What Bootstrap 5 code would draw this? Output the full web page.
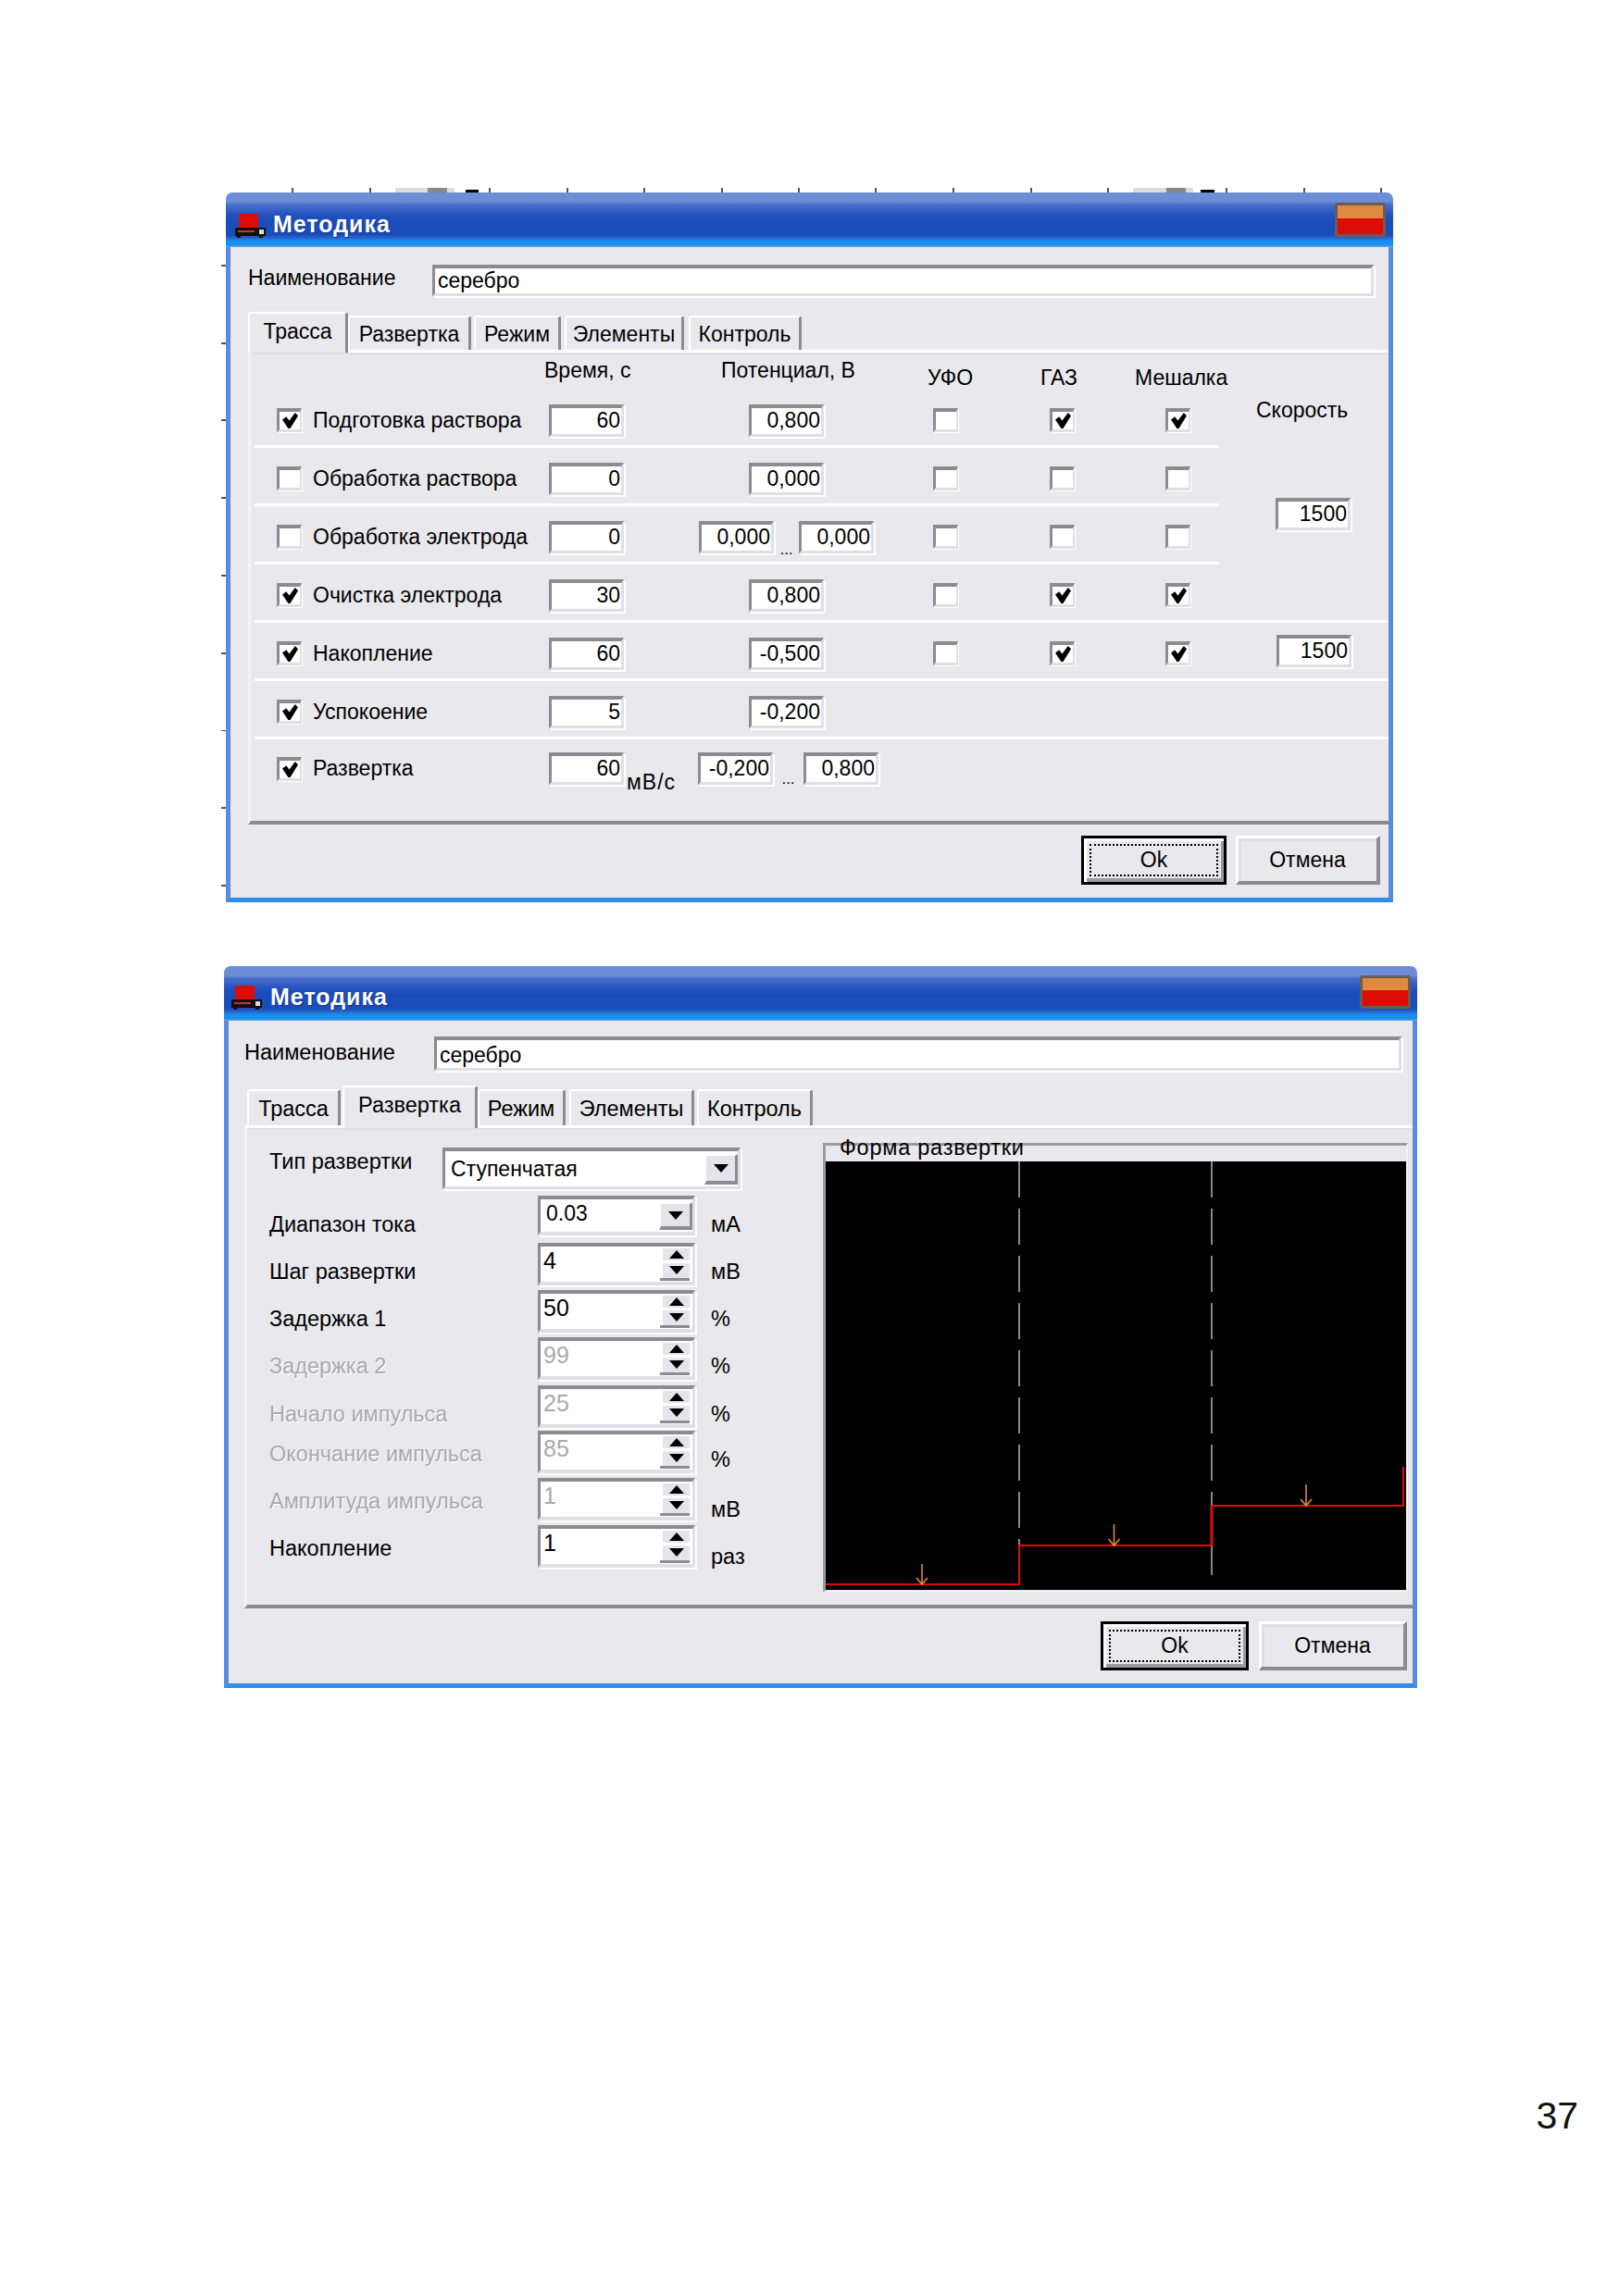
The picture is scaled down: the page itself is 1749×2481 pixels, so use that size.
<!DOCTYPE html>
<html lang="ru">
<head>
<meta charset="utf-8">
<title>Методика</title>
<link rel="stylesheet" href="https://cdn.jsdelivr.net/npm/bootstrap@5.3.0/dist/css/bootstrap.min.css">
<style>
html,body{margin:0;background:#fff}
body{font-family:"Liberation Sans",Arial,sans-serif;font-size:23px;line-height:29px;color:#000;width:1749px;height:2481px;overflow:hidden}
.sheet-top{display:block;height:5px;margin-top:203px;width:1749px}
.dlg-wrap{display:flex;margin-left:239px}
.tick-col{width:5px;flex:none;background:repeating-linear-gradient(to bottom,transparent 0 78px,#555 78px 80px,transparent 80px 83.75px)}
.dlg{display:flex;flex-direction:column;flex:none}
.dlg-a{width:1261px;height:767px}
.dlg-b{width:1289px;height:780px;margin-left:-2px;font-size:23.5px}
.wrap-b{margin-top:69px}
.ttl{height:59px;border-radius:7px 7px 0 0;background:linear-gradient(to bottom,#6d8dd6 0,#6d8dd6 10px,#4a70cb 13px,#2552bf 24px,#1b4dba 30px,#1b4dba 46px,#2a6cd0 50px,#178fee 52px,#178fee 57px,#8aa6dd 59px);display:flex;align-items:flex-start;position:relative;flex:none}
.ttl-ico{margin:23px 0 0 10px;flex:none}
.ttl-txt{margin:19px 0 0 7px;color:#fff;font-weight:700;font-size:25px;letter-spacing:1px;line-height:30px;text-shadow:1px 1px 0 #0f2f86}
.ttl-x{margin:11px 8px 0 auto;width:55px;height:37px;border:3px solid #6b5b55;border-radius:3px;background:linear-gradient(to bottom,#e08a40 0,#e08a40 44%,#dd0d05 44%,#dd0d05 100%)}
.dlg-b .ttl-ico{margin:21px 0 0 8px}
.dlg-b .ttl-txt{margin:18px 0 0 8px}
.dlg-b .ttl-x{margin:10px 7px 0 auto;height:36px}
.cli{flex:1;background:#e9e8ed;border-left:5px solid #5b8be0;border-right:5px solid #5b8be0;border-bottom:5px solid #2f8eea;display:flex;flex-direction:column;min-height:0}
.nm-row{display:flex;align-items:flex-start;margin-top:19px;padding-left:19px;padding-right:16px}
.nm-lbl{width:199px;flex:none;margin-top:0}
.dlg-b .nm-row{margin-top:17px;padding-left:17px;padding-right:12px}
.dlg-b .nm-lbl{width:205px;margin-top:3px}
.fld{border-radius:0;background:#fff;color:#000;padding:0 4px;font-size:23px;line-height:27px;border-style:solid;border-color:#8c8b91 #dfdfe6 #dfdfe6 #8c8b91;border-width:4px 3px 3px 3px;box-shadow:2px 2px 0 #fff;min-height:0;height:35px;white-space:nowrap}
.fld-nm{flex:1;width:auto;height:34px;padding:0 1px 0 3px}
.dlg-b .fld-nm{height:37px;line-height:32px}
.num{width:81px;text-align:right;flex:none;padding-right:1px}
.spd-hi{margin-top:-6px}
.xp-tabs{border:0;margin:17px 0 0 19px;height:41px;align-items:flex-end;flex-wrap:nowrap;flex:none;gap:0;position:relative;z-index:1}
.xp-tabs .nav-link{border-radius:3px 3px 0 0;border:0;border-top:2px solid #fff;border-left:2px solid #fff;border-right:3px solid #8c8b91;background:#e9e8ed;color:#000;padding:3px 0 0;height:37px;line-height:30px;margin:0;font-size:inherit;text-align:center}
.xp-tabs .nav-link.active{height:44px;padding-top:4px;background:#e9e8ed;color:#000;border-color:#fff #8c8b91 #e9e8ed #fff;margin-bottom:-3px}
.dlg-b .xp-tabs{margin:16px 0 0 20px;height:43px}
.dlg-b .xp-tabs .nav-link{height:39px;padding-top:4px}
.dlg-b .xp-tabs .nav-link.active{height:46px}
.t-a1{width:108px}.t-a2{width:133px}.t-a3{width:94px;margin-left:3px}.t-a4{width:129px;margin-left:4px}.t-a5{width:122px;margin-left:5px}
.t-b1{width:101px}.t-b2{width:146px;margin-left:2px}.t-b3{width:95px}.t-b4{width:135px;margin-left:4px}.t-b5{width:125px;margin-left:3px}
.pane{margin-left:19px;height:513px;border-top:3px solid #fff;border-left:3px solid #f4f4f7;border-bottom:4px solid #8c8b91;flex:none;box-shadow:inset 0 2px 0 #dfdfe6}
.dlg-b .pane{margin-left:17px;height:522px;display:flex}
.top-blk{display:flex}
.left-blk{width:1046px;flex:none}
.head-row{display:grid;grid-template-columns:317px 191px 223px 122px 102px auto;height:40px}
.head-row .hi{padding-top:5px}
.head-row .lo{padding-top:13px}
.tr{display:grid;align-items:center;margin-left:4px;padding-left:24px;height:63px;padding-top:6px;border-bottom:3px solid #fff;grid-template-columns:294px 83px 332px 126px 125px 120px 83px}
.tr-last{height:auto;padding-top:10px;border-bottom:0}
.chk-lbl{display:flex;align-items:center;gap:12px;white-space:nowrap}
.chk{width:27px;height:26px;flex:none;background:#fff;border-style:solid;border-color:#8c8b91 #dfdfe6 #dfdfe6 #8c8b91;border-width:4px 2px 3px 3px;box-shadow:1px 1px 0 #fff;display:flex;align-items:center;justify-content:center}
.pot{display:flex;align-items:center}
.pot-one{margin-left:133px}
.pot-two{margin-left:79px}
.pot-unit{width:78px;flex:none;padding:22px 0 0 1px;margin-bottom:-8px;white-space:nowrap;letter-spacing:1px}
.dots{width:27px;flex:none;font-size:17px;line-height:10px;text-align:center;align-self:flex-end;margin-bottom:-1px}
.dots-low{margin-bottom:5px;width:33px}
.spd{flex:1}
.spd-lbl{margin:48px 0 0 40px}
.spd .fld{margin:80px 0 0 61px}
.acts{display:flex;justify-content:flex-end;gap:10px;padding:12px 9px 0 0}
.xp-btn{width:156px;height:53px;border-radius:0;padding:0;font-size:23px;color:#000;background:#e9e8ed;border-style:solid;border-width:3px 4px 4px 3px;border-color:#fff #8c8b91 #8c8b91 #fff;box-shadow:inset 0 3px 0 #dfdfe6,inset 3px 0 0 #dfdfe6;line-height:40px}
.xp-btn:hover{background:#e9e8ed;color:#000;border-color:#fff #8c8b91 #8c8b91 #fff}
.xp-ok{border:3px solid #000;box-shadow:inset 3px 3px 0 #fff,inset -3px -4px 0 #9b9ba1;width:157px;padding:6px 6px 7px 6px}
.xp-ok:hover{border-color:#000}
.xp-ok span{display:block;border:2px dotted #000;height:35px;line-height:31px}
.dlg-b .acts{padding:14px 6px 0 0;gap:11px}
.dlg-b .xp-btn{width:160px}
.col-l{width:622px;flex:none;padding-top:21px}
.typ-row{display:flex;align-items:flex-start;padding-left:24px}
.typ-lbl{width:187px;flex:none;padding-top:1px}
.cmb{display:flex;justify-content:space-between;padding:0 2px 0 5px;align-items:stretch;margin:0}
.cmb-wide{width:322px;height:45px;line-height:38px;flex:none;padding:0 0 0 6px}
.cmb-btn{width:36px;flex:none;margin:3px 0 2px;background:#e4e4ea;border-right:3px solid #8c8b91;border-bottom:4px solid #8c8b91;border-left:2px solid #fff;border-top:2px solid #fff;display:flex;align-items:center;justify-content:center}
.cmb-sm{width:36px}
.tri-d{width:0;height:0;border-left:8px solid transparent;border-right:8px solid transparent;border-top:9px solid #000}
.tri-u{width:0;height:0;border-left:8px solid transparent;border-right:8px solid transparent;border-bottom:9px solid #000}
.fr{display:grid;grid-template-columns:290px 172px auto;padding-left:24px;height:51px;align-items:start}
.fr-first{margin-top:7px}
.fr-52{height:52px}
.fr-49{height:49px}
.fl{padding-top:17px;white-space:nowrap}
.fl-hi{padding-top:11px}
.fu{padding:17px 0 0 15px}
.fu-lo{padding-top:20px}
.dis{color:#a9a9ae;text-shadow:1px 1px 0 #fff}
.spin{width:170px;height:46px;display:flex;justify-content:space-between;padding:0 3px 0 3px;line-height:30px;font-size:25px;border-width:4px 3px 4px 3px}
.cmb-range{height:43px;padding-left:6px;padding-right:0;line-height:30px;font-size:23px}
.spin-b{width:32px;flex:none;display:flex;flex-direction:column;gap:3px;padding-top:2px;border-bottom:3px solid #8c8b91;margin-bottom:1px}
.spin-b>div{background:#e4e4ea;display:flex;align-items:center;justify-content:center;margin-left:3px}
.s-up{height:13px}.s-dn{height:17px}
.grp{position:relative;margin-top:16px;width:632px;height:485px;border-style:solid;border-color:#9b9ba1 #f4f4f7 #f4f4f7 #9b9ba1;border-width:3px 2px 1px 3px;padding-top:17px;flex:none}
.grp-ttl{position:absolute;left:15px;top:-11px;line-height:27px;white-space:nowrap;letter-spacing:.75px}
.grp svg{display:block}
.pg-no{display:flex;justify-content:flex-end;padding-right:44px;margin-top:438px;font-size:41px;line-height:49px;color:#111}
</style>
</head>
<body>
<svg width="0" height="0" class="position-absolute">
  <defs>
    <symbol id="tick" viewBox="0 0 16 16"><polygon points="0,7 4,4 7,8 13,0 16,3 8,16 6,16"/></symbol>
    <symbol id="app" viewBox="0 0 34 26">
      <rect x="4" y="0" width="21" height="15" fill="#dd0d05"/>
      <rect x="0" y="15" width="33" height="9" fill="#111"/>
      <rect x="3" y="18" width="18" height="2" fill="#c33"/>
      <rect x="2" y="24" width="4" height="2" fill="#111"/><rect x="26" y="24" width="4" height="2" fill="#111"/>
      <rect x="26" y="17" width="5" height="5" fill="#ddd"/>
    </symbol>
  </defs>
</svg>

<svg class="sheet-top" viewBox="0 0 1749 5">
  <g fill="#555">
    <rect x="315" y="0" width="2" height="5"/><rect x="399" y="0" width="2" height="5"/><rect x="528" y="0" width="2" height="5"/><rect x="612" y="0" width="2" height="5"/><rect x="695" y="0" width="2" height="5"/><rect x="779" y="0" width="2" height="5"/><rect x="862" y="0" width="2" height="5"/><rect x="945" y="0" width="2" height="5"/><rect x="1029" y="0" width="2" height="5"/><rect x="1113" y="0" width="2" height="5"/><rect x="1196" y="0" width="2" height="5"/><rect x="1324" y="0" width="2" height="5"/><rect x="1408" y="0" width="2" height="5"/><rect x="1491" y="0" width="2" height="5"/>
  </g>
  <rect x="427" y="0" width="64" height="5" fill="#ddd"/><rect x="462" y="0" width="21" height="5" fill="#888"/><rect x="503" y="2" width="14" height="3" fill="#000"/>
  <rect x="1224" y="0" width="65" height="5" fill="#ddd"/><rect x="1260" y="0" width="21" height="5" fill="#888"/><rect x="1297" y="2" width="15" height="3" fill="#000"/>
</svg>

<div class="dlg-wrap">
  <div class="tick-col"></div>
  <section class="dlg dlg-a">
    <div class="ttl">
      <svg class="ttl-ico" width="34" height="26"><use href="#app"/></svg>
      <div class="ttl-txt">Методика</div>
      <div class="ttl-x"></div>
    </div>
    <div class="cli">
      <div class="nm-row">
        <div class="nm-lbl">Наименование</div>
        <div class="form-control fld fld-nm">серебро</div>
      </div>
      <ul class="nav nav-tabs xp-tabs">
        <li class="nav-item t-a1"><a class="nav-link active">Трасса</a></li>
        <li class="nav-item t-a2"><a class="nav-link">Развертка</a></li>
        <li class="nav-item t-a3"><a class="nav-link">Режим</a></li>
        <li class="nav-item t-a4"><a class="nav-link">Элементы</a></li>
        <li class="nav-item t-a5"><a class="nav-link">Контроль</a></li>
      </ul>
      <div class="pane">
        <div class="top-blk">
          <div class="left-blk">
            <div class="head-row">
              <div></div>
              <div class="hi">Время, с</div>
              <div class="hi">Потенциал, В</div>
              <div class="lo">УФО</div>
              <div class="lo">ГАЗ</div>
              <div class="lo">Мешалка</div>
            </div>
            <div class="tr">
              <div class="chk-lbl"><div class="chk"><svg width="17" height="17"><use href="#tick"/></svg></div>Подготовка раствора</div>
              <div class="form-control fld num">60</div>
              <div class="pot"><div class="form-control fld num pot-one">0,800</div></div>
              <div class="chk"></div>
              <div class="chk"><svg width="17" height="17"><use href="#tick"/></svg></div>
              <div class="chk"><svg width="17" height="17"><use href="#tick"/></svg></div>
            </div>
            <div class="tr">
              <div class="chk-lbl"><div class="chk"></div>Обработка раствора</div>
              <div class="form-control fld num">0</div>
              <div class="pot"><div class="form-control fld num pot-one">0,000</div></div>
              <div class="chk"></div><div class="chk"></div><div class="chk"></div>
            </div>
            <div class="tr">
              <div class="chk-lbl"><div class="chk"></div>Обработка электрода</div>
              <div class="form-control fld num">0</div>
              <div class="pot"><div class="form-control fld num pot-two">0,000</div><div class="dots">...</div><div class="form-control fld num">0,000</div></div>
              <div class="chk"></div><div class="chk"></div><div class="chk"></div>
            </div>
          </div>
          <div class="spd">
            <div class="spd-lbl">Скорость</div>
            <div class="form-control fld num">1500</div>
          </div>
        </div>
        <div class="tr">
          <div class="chk-lbl"><div class="chk"><svg width="17" height="17"><use href="#tick"/></svg></div>Очистка электрода</div>
          <div class="form-control fld num">30</div>
          <div class="pot"><div class="form-control fld num pot-one">0,800</div></div>
          <div class="chk"></div>
          <div class="chk"><svg width="17" height="17"><use href="#tick"/></svg></div>
          <div class="chk"><svg width="17" height="17"><use href="#tick"/></svg></div>
        </div>
        <div class="tr">
          <div class="chk-lbl"><div class="chk"><svg width="17" height="17"><use href="#tick"/></svg></div>Накопление</div>
          <div class="form-control fld num">60</div>
          <div class="pot"><div class="form-control fld num pot-one">-0,500</div></div>
          <div class="chk"></div>
          <div class="chk"><svg width="17" height="17"><use href="#tick"/></svg></div>
          <div class="chk"><svg width="17" height="17"><use href="#tick"/></svg></div>
          <div class="form-control fld num spd-hi">1500</div>
        </div>
        <div class="tr">
          <div class="chk-lbl"><div class="chk"><svg width="17" height="17"><use href="#tick"/></svg></div>Успокоение</div>
          <div class="form-control fld num">5</div>
          <div class="pot"><div class="form-control fld num pot-one">-0,200</div></div>
        </div>
        <div class="tr tr-last">
          <div class="chk-lbl"><div class="chk"><svg width="17" height="17"><use href="#tick"/></svg></div>Развертка</div>
          <div class="form-control fld num">60</div>
          <div class="pot"><div class="pot-unit">мВ/с</div><div class="form-control fld num">-0,200</div><div class="dots dots-low">...</div><div class="form-control fld num">0,800</div></div>
        </div>
      </div>
      <div class="acts">
        <button type="button" class="btn xp-btn xp-ok"><span>Ok</span></button>
        <button type="button" class="btn xp-btn">Отмена</button>
      </div>
    </div>
  </section>
</div>

<div class="dlg-wrap wrap-b">
  <div class="tick-col invisible"></div>
  <section class="dlg dlg-b">
    <div class="ttl">
      <svg class="ttl-ico" width="34" height="26"><use href="#app"/></svg>
      <div class="ttl-txt">Методика</div>
      <div class="ttl-x"></div>
    </div>
    <div class="cli">
      <div class="nm-row">
        <div class="nm-lbl">Наименование</div>
        <div class="form-control fld fld-nm">серебро</div>
      </div>
      <ul class="nav nav-tabs xp-tabs">
        <li class="nav-item t-b1"><a class="nav-link">Трасса</a></li>
        <li class="nav-item t-b2"><a class="nav-link active">Развертка</a></li>
        <li class="nav-item t-b3"><a class="nav-link">Режим</a></li>
        <li class="nav-item t-b4"><a class="nav-link">Элементы</a></li>
        <li class="nav-item t-b5"><a class="nav-link">Контроль</a></li>
      </ul>
      <div class="pane">
        <div class="col-l">
          <div class="typ-row">
            <div class="typ-lbl">Тип развертки</div>
            <div class="form-control fld cmb cmb-wide"><span>Ступенчатая</span><div class="cmb-btn"><div class="tri-d"></div></div></div>
          </div>
          <div class="fr fr-first">
            <div class="fl">Диапазон тока</div>
            <div class="form-control fld spin cmb-range"><span>0.03</span><div class="cmb-btn cmb-sm"><div class="tri-d"></div></div></div>
            <div class="fu">мА</div>
          </div>
          <div class="fr">
            <div class="fl">Шаг развертки</div>
            <div class="form-control fld spin"><span>4</span><div class="spin-b"><div class="s-up"><div class="tri-u"></div></div><div class="s-dn"><div class="tri-d"></div></div></div></div>
            <div class="fu">мВ</div>
          </div>
          <div class="fr">
            <div class="fl">Задержка 1</div>
            <div class="form-control fld spin"><span>50</span><div class="spin-b"><div class="s-up"><div class="tri-u"></div></div><div class="s-dn"><div class="tri-d"></div></div></div></div>
            <div class="fu">%</div>
          </div>
          <div class="fr fr-52">
            <div class="fl dis">Задержка 2</div>
            <div class="form-control fld spin"><span class="dis">99</span><div class="spin-b"><div class="s-up"><div class="tri-u"></div></div><div class="s-dn"><div class="tri-d"></div></div></div></div>
            <div class="fu">%</div>
          </div>
          <div class="fr fr-49">
            <div class="fl dis">Начало импульса</div>
            <div class="form-control fld spin"><span class="dis">25</span><div class="spin-b"><div class="s-up"><div class="tri-u"></div></div><div class="s-dn"><div class="tri-d"></div></div></div></div>
            <div class="fu">%</div>
          </div>
          <div class="fr">
            <div class="fl fl-hi dis">Окончание импульса</div>
            <div class="form-control fld spin"><span class="dis">85</span><div class="spin-b"><div class="s-up"><div class="tri-u"></div></div><div class="s-dn"><div class="tri-d"></div></div></div></div>
            <div class="fu">%</div>
          </div>
          <div class="fr">
            <div class="fl fl-hi dis">Амплитуда импульса</div>
            <div class="form-control fld spin"><span class="dis">1</span><div class="spin-b"><div class="s-up"><div class="tri-u"></div></div><div class="s-dn"><div class="tri-d"></div></div></div></div>
            <div class="fu fu-lo">мВ</div>
          </div>
          <div class="fr">
            <div class="fl fl-hi">Накопление</div>
            <div class="form-control fld spin"><span>1</span><div class="spin-b"><div class="s-up"><div class="tri-u"></div></div><div class="s-dn"><div class="tri-d"></div></div></div></div>
            <div class="fu fu-lo">раз</div>
          </div>
        </div>
        <div class="grp">
          <div class="grp-ttl">Форма развертки</div>
          <svg width="627" height="463" viewBox="0 0 627 463">
            <rect width="627" height="463" fill="#000"/>
            <g stroke="#888" stroke-width="2" stroke-dasharray="39 12">
              <line x1="209" y1="0" x2="209" y2="420"/>
              <line x1="417" y1="0" x2="417" y2="450"/>
            </g>
            <g fill="none" stroke="#dd0d05" stroke-width="2">
              <path d="M0 457H209V415H417"/>
              <path d="M417 415V372" stroke-width="3"/>
              <path d="M417 372H624V330"/>
            </g>
            <g fill="none" stroke="#e8913e" stroke-width="1.5">
              <path d="M104 435V457M98 450L104 457L110 450"/>
              <path d="M311.500 392V415M305.500 408L311.500 415L317.500 408"/>
              <path d="M519 349V372M513 365L519 372L525 365"/>
            </g>
          </svg>
        </div>
      </div>
      <div class="acts">
        <button type="button" class="btn xp-btn xp-ok"><span>Ok</span></button>
        <button type="button" class="btn xp-btn">Отмена</button>
      </div>
    </div>
  </section>
</div>

<div class="pg-no">37</div>
</body>
</html>
